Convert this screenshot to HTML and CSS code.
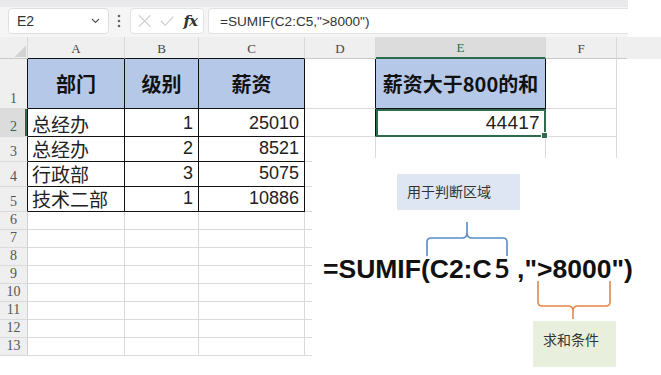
FILE: index.html
```html
<!DOCTYPE html>
<html lang="zh">
<head>
    <meta charset="UTF-8">
    <title>SUMIF</title>
    <link rel="stylesheet" href="styles.css">
</head>
<body>

<div class="app">
    <div class="top-strip"></div>

    <div class="toolbar">
        <div class="name-box">
            <span>E2</span>
            <svg class="chevron" width="9" height="6" viewBox="0 0 9 6"><path d="M1 1 L4.5 4.5 L8 1" fill="none" stroke="#555" stroke-width="1.2"/></svg>
        </div>
        <svg class="more" width="4" height="14" viewBox="0 0 4 14"><circle cx="2" cy="2" r="1.3" fill="#666"/><circle cx="2" cy="7" r="1.3" fill="#666"/><circle cx="2" cy="12" r="1.3" fill="#666"/></svg>
        <div class="fx-box">
            <svg width="14" height="14" viewBox="0 0 14 14"><path d="M1 1 L13 13 M13 1 L1 13" stroke="#c9c9c9" stroke-width="1.2"/></svg>
            <svg width="15" height="12" viewBox="0 0 15 12"><path d="M1 6 L5.5 10.5 L14 1.5" fill="none" stroke="#c9c9c9" stroke-width="1.2"/></svg>
            <span class="fx">fx</span>
        </div>
        <div class="formula-input">=SUMIF(C2:C5,"&gt;8000")</div>
    </div>

    <div class="col-heads">
        <div class="corner"></div>
        <div class="ch table-top">A</div>
        <div class="ch table-top">B</div>
        <div class="ch table-top">C</div>
        <div class="ch">D</div>
        <div class="ch sel">E</div>
        <div class="ch">F</div>
        <div class="ch tail"></div>
    </div>

    <div class="sheet">
        <div class="rh edge">1</div><div class="c hd">部门</div><div class="c hd">级别</div><div class="c hd">薪资</div><div class="c pre"></div><div class="c hd">薪资大于800的和</div><div class="c"></div>
        <div class="rh edge cur">2</div><div class="c t txt">总经办</div><div class="c t num">1</div><div class="c t num">25010</div><div class="c pre"></div><div class="c t num active">44417</div><div class="c"></div>
        <div class="rh edge">3</div><div class="c t txt">总经办</div><div class="c t num">2</div><div class="c t num">8521</div><div class="c"></div><div class="c"></div><div class="c"></div>
        <div class="rh edge">4</div><div class="c t txt">行政部</div><div class="c t num">3</div><div class="c t num">5075</div><div class="c"></div><div class="c"></div><div class="c"></div>
        <div class="rh edge">5</div><div class="c t txt">技术二部</div><div class="c t num">1</div><div class="c t num">10886</div><div class="c"></div><div class="c"></div><div class="c"></div>
        <div class="rh">6</div><div class="c"></div><div class="c"></div><div class="c"></div><div class="c"></div><div class="c"></div><div class="c"></div>
        <div class="rh">7</div><div class="c"></div><div class="c"></div><div class="c"></div><div class="c"></div><div class="c"></div><div class="c"></div>
        <div class="rh">8</div><div class="c"></div><div class="c"></div><div class="c"></div><div class="c"></div><div class="c"></div><div class="c"></div>
        <div class="rh">9</div><div class="c"></div><div class="c"></div><div class="c"></div><div class="c"></div><div class="c"></div><div class="c"></div>
        <div class="rh">10</div><div class="c"></div><div class="c"></div><div class="c"></div><div class="c"></div><div class="c"></div><div class="c"></div>
        <div class="rh">11</div><div class="c"></div><div class="c"></div><div class="c"></div><div class="c"></div><div class="c"></div><div class="c"></div>
        <div class="rh">12</div><div class="c"></div><div class="c"></div><div class="c"></div><div class="c"></div><div class="c"></div><div class="c"></div>
        <div class="rh">13</div><div class="c"></div><div class="c"></div><div class="c"></div><div class="c"></div><div class="c"></div><div class="c"></div>
    </div>

    <!-- annotation pasted over the right part of the sheet -->
    <div class="note">
        <div class="tip tip-range">用于判断区域</div>
        <svg class="brace brace-range" width="82" height="35" viewBox="0 0 82 35">
            <path d="M1 35 V21 Q1 17 5 17 H36 Q41 17 41 12 V1 M41 12 Q41 17 46 17 H77 Q81 17 81 21 V35" fill="none" stroke="#5b8cc4" stroke-width="1.6"/>
        </svg>
        <div class="big-formula">=SUMIF(C2:C<span class="five">5</span> ,"&gt;8000")</div>
        <svg class="brace brace-cond" width="74" height="38" viewBox="0 0 74 38">
            <path d="M1 0 V21 Q1 25 5 25 H31 Q36 25 36 30 V38 M36 30 Q36 25 41 25 H69 Q73 25 73 21 V0" fill="none" stroke="#e2874a" stroke-width="1.6"/>
        </svg>
        <div class="tip tip-cond">求和条件</div>
    </div>
</div>

</body>
</html>
```

FILE: styles.css
```css
body {
    margin: 0;
    padding: 0;
    background: #fff;
    font-family: "Liberation Sans", "Noto Sans CJK SC", sans-serif;
    color: #222;
}

.app {
    position: relative;
    width: 661px;
    height: 375px;
    overflow: hidden;
}

.top-strip {
    width: 628px;
    height: 7px;
    background: #e9e9ec;
}

.toolbar {
    width: 628px;
    height: 30px;
    box-sizing: border-box;
    padding: 1px 0 3px 8px;
    background: #f5f5f5;
    display: flex;
    align-items: stretch;
}

.name-box {
    width: 101px;
    box-sizing: border-box;
    background: #fff;
    border: 1px solid #dedede;
    border-radius: 4px;
    display: flex;
    align-items: center;
    justify-content: space-between;
    padding: 0 8px 0 8px;
    font-size: 14px;
    color: #333;
}

.more {
    align-self: center;
    margin: 0 9px 0 8px;
}

.fx-box {
    width: 74px;
    box-sizing: border-box;
    background: #fff;
    border: 1px solid #e2e2e2;
    border-radius: 4px;
    display: flex;
    align-items: center;
    gap: 9px;
    padding: 0 6px 0 7px;
}

.fx {
    font-family: "DejaVu Serif", serif;
    font-style: italic;
    font-weight: bold;
    font-size: 15px;
    color: #333;
    letter-spacing: -1px;
}

.formula-input {
    flex: 1;
    margin-left: 4px;
    background: #fff;
    border: 1px solid #e2e2e2;
    border-right: none;
    border-radius: 4px 0 0 4px;
    padding-left: 11px;
    font-size: 13.6px;
    color: #333;
    display: flex;
    align-items: center;
}

.col-heads {
    display: grid;
    grid-template-columns: 28px 97px 74px 106px 71px 170px 71px 10px;
    height: 22px;
    background: #efefef;
}

.ch {
    box-sizing: border-box;
    border-right: 1px solid #d8d8d8;
    border-bottom: 1px solid #c8c8c8;
    font-family: "Liberation Serif", serif;
    font-size: 13px;
    color: #444;
    display: flex;
    align-items: flex-end;
    justify-content: center;
    padding-bottom: 1px;
}

.ch.table-top {
    border-bottom-color: #111;
}

.ch.sel {
    background: #dcdcdc;
    color: #2d6b4d;
    border-bottom: 2px solid #2d6b4d;
}

.ch.tail {
    border-right: none;
}

.corner {
    border-right: 1px solid #d8d8d8;
    border-bottom: 1px solid #c8c8c8;
    background: linear-gradient(135deg, transparent 50%, #d2d2d2 50%) no-repeat right 1px bottom 1px / 12px 11px;
}

.sheet {
    display: grid;
    grid-template-columns: 28px 97px 74px 106px 71px 170px 71px;
    grid-template-rows: 50px 28px 25px 25px 25px repeat(8, 18px);
    width: 617px;
}

.rh {
    box-sizing: border-box;
    background: #efefef;
    border-right: 1px solid #d0d0d0;
    border-bottom: 1px solid #dadada;
    font-family: "Liberation Serif", serif;
    font-size: 14px;
    color: #555;
    display: flex;
    align-items: flex-end;
    justify-content: center;
    line-height: 1;
    padding-bottom: 2px;
}

.rh.edge {
    border-right-color: #111;
}

.rh.cur {
    background: #dcdcdc;
    color: #2d6b4d;
    box-shadow: inset -2px 0 #2d6b4d;
}

.c {
    box-sizing: border-box;
    border-right: 1px solid #dadada;
    border-bottom: 1px solid #dadada;
    display: flex;
    align-items: flex-end;
    padding: 0 5px 2px 4px;
    white-space: nowrap;
}

.c.pre {
    border-right-color: #111;
}

.c.hd {
    background: #b6c8e8;
    border-right-color: #111;
    border-bottom-color: #111;
    font-family: "Noto Sans CJK SC", sans-serif;
    font-weight: bold;
    font-size: 20px;
    align-items: center;
    justify-content: center;
    padding: 0;
    color: #111;
}

.c.t {
    border-right-color: #111;
    border-bottom-color: #111;
    line-height: 1.2;
}

.c.txt {
    font-family: "Noto Sans CJK SC", sans-serif;
    font-size: 19px;
    line-height: 1.25;
    padding-bottom: 0;
}

.c.num {
    justify-content: flex-end;
    font-size: 18px;
    padding-bottom: 1px;
}

.c.active {
    position: relative;
    font-size: 19px;
    letter-spacing: 0.3px;
    outline: 2px solid #2d6b4d;
    outline-offset: -2px;
}

.c.active::after {
    content: '';
    position: absolute;
    right: -3px;
    bottom: -3px;
    width: 5px;
    height: 5px;
    background: #2d6b4d;
    border: 1px solid #fff;
}

.note {
    position: absolute;
    left: 312px;
    top: 158px;
    right: 0;
    bottom: 0;
    background: #fff;
}

.tip {
    position: absolute;
    font-family: "Noto Sans CJK SC", sans-serif;
    font-size: 14px;
    color: #333;
    box-sizing: border-box;
}

.tip-range {
    left: 85px;
    top: 16px;
    width: 123px;
    height: 36px;
    background: #dde6f2;
    padding: 7px 0 0 10px;
}

.tip-cond {
    left: 221px;
    top: 163px;
    width: 83px;
    height: 46px;
    background: #e8efdc;
    padding: 8px 0 0 10px;
}

.brace {
    position: absolute;
}

.brace-range {
    left: 114px;
    top: 63px;
}

.brace-cond {
    left: 225px;
    top: 123px;
}

.big-formula {
    position: absolute;
    left: 11px;
    top: 97px;
    font-family: "Liberation Sans", sans-serif;
    font-weight: bold;
    font-size: 26.5px;
    line-height: 27px;
    color: #111;
    white-space: nowrap;
}

.five {
    font-family: "Open Sans", sans-serif;
    font-weight: 600;
    margin-left: 3px;
}
```
